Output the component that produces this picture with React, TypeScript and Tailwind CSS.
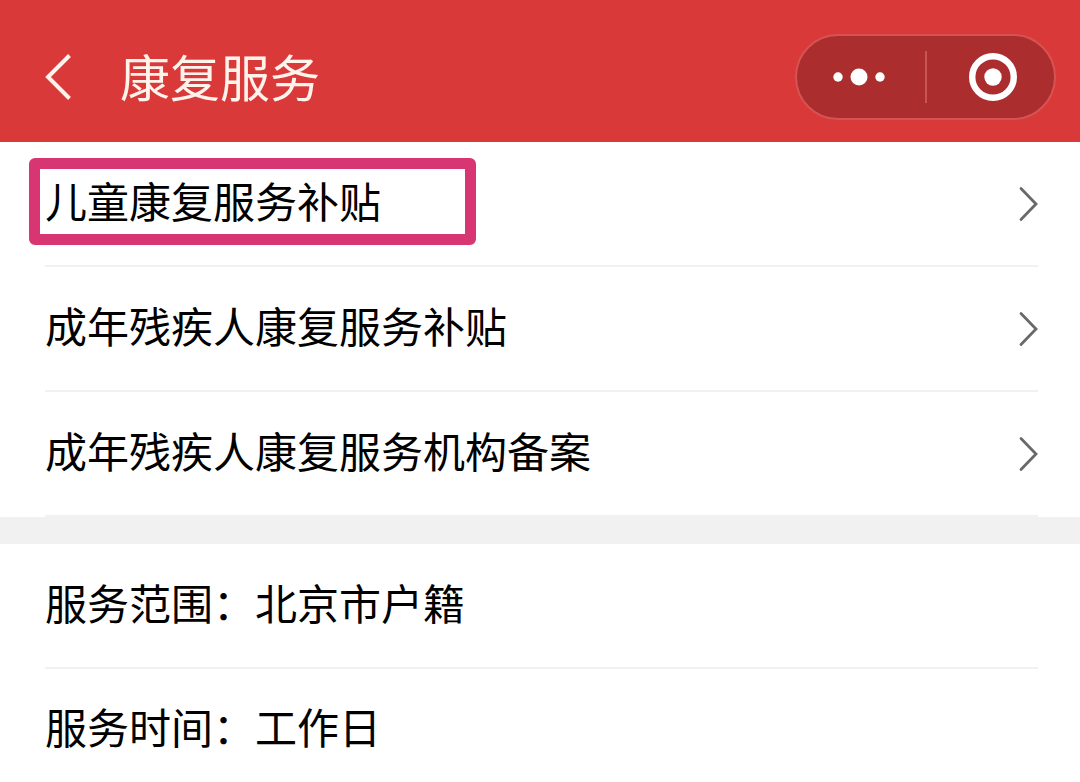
const services = [
    { title: "儿童康复服务补贴", highlighted: true },
    { title: "成年残疾人康复服务补贴" },
    { title: "成年残疾人康复服务机构备案" },
];

const details = [
    { label: "服务范围", value: "北京市户籍" },
    { label: "服务时间", value: "工作日" },
];

const Header = () => {
    return (
        <header className="flex h-[142px] items-center bg-[#da3939] pt-3 pr-6 pl-11 text-[#fff3ec]">
            <button type="button" aria-label="返回" className="mr-12 shrink-0">
                <svg width="28" height="48" viewBox="0 0 28 48" fill="none" stroke="currentColor" strokeWidth="4">
                    <path d="M25.5 2.5 4 24l21.5 21.5" />
                </svg>
            </button>

            <h1 className="pb-1 text-[50px] leading-[60px]">康复服务</h1>

            {/* Mini program capsule */}
            <div className="ml-auto flex h-[86px] w-[261px] shrink-0 items-center rounded-full border-2 border-[#d75353] bg-[#ab2d2e] text-white">
                <button type="button" aria-label="更多" className="flex w-32 justify-center pr-1">
                    <svg width="52" height="18" viewBox="0 0 52 18" fill="currentColor">
                        <circle cx="5" cy="9" r="4.7" />
                        <circle cx="26" cy="9" r="8.5" />
                        <circle cx="47" cy="9" r="4.7" />
                    </svg>
                </button>
                <span className="h-13 w-0.5 bg-[#c95456]" />
                <button type="button" aria-label="关闭" className="flex flex-1 justify-center pl-1">
                    <svg width="48" height="48" viewBox="0 0 48 48" fill="none">
                        <circle cx="24" cy="24" r="20.8" stroke="currentColor" strokeWidth="6.4" />
                        <circle cx="24" cy="24" r="8.7" fill="currentColor" />
                    </svg>
                </button>
            </div>
        </header>
    );
};

const App = () => {
    return (
        <div className="w-full bg-white font-['Noto_Sans_CJK_SC',sans-serif] text-black">
            <Header />

            <main className="text-[42px] leading-[60px]">
                {/* Services */}
                <ul className="pr-[42px] pl-[45px]">
                    {services.map((service) => (
                        <li key={service.title} className="relative border-b-2 border-[#f1f1f1]">
                            <button type="button" className="flex h-[123px] w-full items-center justify-between text-left">
                                <span className="pb-2">{service.title}</span>
                                <svg width="20" height="36" viewBox="0 0 20 36" fill="none" stroke="#696969" strokeWidth="2.8" strokeLinecap="round">
                                    <path d="M3 2.5 18 18 3 33.5" />
                                </svg>
                            </button>
                            {service.highlighted && (
                                <span className="pointer-events-none absolute top-4 -left-4 h-[87px] w-[447px] rounded-md border-[11px] border-[#d83573]" />
                            )}
                        </li>
                    ))}
                </ul>

                <div className="h-[27px] bg-[#f1f1f1]" />

                {/* Details */}
                <dl className="pr-[42px] pl-[45px]">
                    {details.map((detail) => (
                        <div key={detail.label} className="flex h-[125px] items-center border-b-2 border-[#f1f1f1] pb-2 last:h-[113px] last:border-b-0 last:pb-0">
                            <dt>{detail.label}：</dt>
                            <dd>{detail.value}</dd>
                        </div>
                    ))}
                </dl>
            </main>
        </div>
    );
};

export default App;
